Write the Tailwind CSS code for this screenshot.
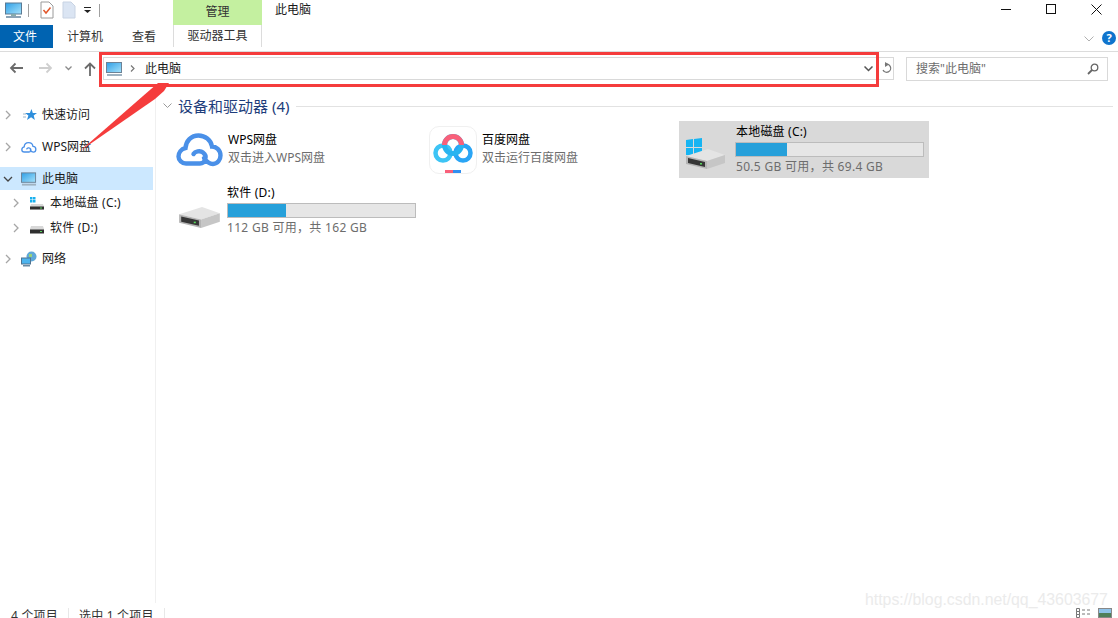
<!DOCTYPE html>
<html lang="zh-CN">
<head>
  <meta charset="UTF-8" />
  <title>此电脑</title>
  <script src="https://cdn.jsdelivr.net/npm/@tailwindcss/browser@4"></script>
</head>
<body class="bg-white text-[#1a1a1a] text-[12px] leading-[16px] font-['Noto_Sans','Noto_Sans_CJK_SC',sans-serif]">
  <div class="relative w-[1118px] h-[618px] overflow-hidden flex flex-col">

    <!-- title bar -->
    <div class="h-[25px] flex shrink-0">
      <div class="w-[173px] flex items-center pl-[5px] pb-[5px]">
        <svg width="17" height="17" viewBox="0 0 17 17"><defs><linearGradient id="screen" x1="0" y1="0" x2="1" y2="1"><stop offset="0" stop-color="#2f9fe6"/><stop offset="1" stop-color="#a5e2fb"/></linearGradient></defs><rect x="0.5" y="1" width="16" height="11" fill="url(#screen)" stroke="#5a7a94"/><rect x="6" y="12" width="5" height="2" fill="#8aa"/><rect x="1" y="14" width="15" height="2" fill="#8ba3b5"/></svg>
        <div class="w-px h-[13px] bg-[#a0a0a0] ml-[6px]"></div>
        <svg class="ml-[11px]" width="14" height="18" viewBox="0 0 14 18"><path d="M1 1h8l4 4v12H1z" fill="#fff" stroke="#9a9a9a"/><path d="M3.500 9l2.500 3 4.500-5.500" fill="none" stroke="#e2572b" stroke-width="1.500"/></svg>
        <svg class="ml-[8px]" width="14" height="18" viewBox="0 0 14 18"><path d="M1 1h8l4 4v12H1z" fill="#dbe5f3" stroke="#c8d3e3"/></svg>
        <svg class="ml-[8px]" width="7" height="6" viewBox="0 0 7 6"><rect width="7" height="1" fill="#222"/><path d="M0 3h7L3.500 6z" fill="#222"/></svg>
        <div class="w-px h-[13px] bg-[#a0a0a0] ml-[8px]"></div>
      </div>
      <div class="w-[89px] bg-[#c4f0a0] flex justify-center items-center pb-[2px] text-[#333]">管理</div>
      <div class="pl-[13px] pt-[2px]">此电脑</div>
      <div class="ml-auto flex">
        <div class="w-[45px] flex justify-center pt-[9px]"><div class="w-[10px] h-px bg-[#111]"></div></div>
        <div class="w-[46px] flex justify-center pt-[4px]"><div class="w-[10px] h-[10px] border border-[#111]"></div></div>
        <div class="w-[44px] flex justify-center pt-[4px]"><svg width="11" height="11" viewBox="0 0 11 11"><path d="M.5.500l10 10M10.500.500l-10 10" stroke="#111"/></svg></div>
      </div>
    </div>

    <!-- ribbon tabs -->
    <div class="h-[27px] flex shrink-0 border-b border-[#dcdcdc]">
      <div class="w-[53px] h-[23px] bg-[#0063b1] text-white flex items-center justify-center pr-[3px]">文件</div>
      <div class="w-[64px] h-[23px] flex items-center justify-center text-[#333]">计算机</div>
      <div class="w-[56px] h-[23px] flex items-center justify-center text-[#333] pr-[2px]">查看</div>
      <div class="w-[89px] h-[22px] flex items-center justify-center border-x border-[#dcdcdc] text-[#333]">驱动器工具</div>
      <div class="ml-auto flex items-start pt-[11px] pr-[2px]">
        <svg width="10" height="6" viewBox="0 0 10 6"><path d="M.5.500L5 5l4.500-4.500" fill="none" stroke="#b0b0b0"/></svg>
        <div class="ml-[8px] -mt-[5px] w-[14px] h-[14px] rounded-full bg-[#0f74cd] text-white text-[11px] leading-[14px] font-bold text-center">?</div>
      </div>
    </div>

    <!-- address row -->
    <div class="h-[38px] shrink-0 flex items-start pt-[5px] pl-[9px]">
      <svg class="mt-[5px]" width="14" height="12" viewBox="0 0 14 12"><path d="M14 6H2M6.500 1.500L2 6l4.500 4.500" fill="none" stroke="#6b6b6b" stroke-width="1.800"/></svg>
      <svg class="mt-[5px] ml-[16px]" width="14" height="12" viewBox="0 0 14 12"><path d="M0 6h12M7.500 1.500L12 6l-4.500 4.500" fill="none" stroke="#cfcfcf" stroke-width="1.800"/></svg>
      <svg class="mt-[9px] ml-[12px]" width="7" height="5" viewBox="0 0 7 5"><path d="M.5.500l3 3 3-3" fill="none" stroke="#8a8a8a" stroke-width="1.300"/></svg>
      <svg class="mt-[5px] ml-[12px]" width="12" height="14" viewBox="0 0 12 14"><path d="M6 14V2M1 6.500L6 1.500l5 5" fill="none" stroke="#6b6b6b" stroke-width="1.800"/></svg>
      <div class="ml-[7px] w-[775px] h-[23px] border border-[#d9d9d9] flex items-center pl-[2px]">
        <svg width="17" height="16" viewBox="0 0 17 16"><rect x="0.500" y="1.500" width="15" height="10" fill="url(#screen)" stroke="#6c8296"/><rect x="1" y="13" width="15" height="2" fill="#9fb2c0"/></svg>
        <svg class="ml-[7px]" width="5" height="7" viewBox="0 0 5 7"><path d="M1 .500l3 3-3 3" fill="none" stroke="#777" stroke-width="1.200"/></svg>
        <span class="ml-[10px]">此电脑</span>
        <svg class="ml-auto mr-[4px]" width="9" height="6" viewBox="0 0 9 6"><path d="M.5.500l4 4 4-4" fill="none" stroke="#555" stroke-width="1.500"/></svg>
      </div>
      <div class="w-[16px] h-[23px] border border-l-0 border-[#d9d9d9] flex items-center justify-center">
        <svg width="12" height="13" viewBox="0 0 12 13"><path d="M6.500 2.500a4 4 0 1 1-4 4" fill="none" stroke="#777" stroke-width="1.300" transform="rotate(-25 6 6)"/><path d="M5 0l4 2.500L5 5z" fill="#777"/></svg>
      </div>
      <div class="ml-[12px] w-[202px] h-[24px] border border-[#d9d9d9] flex items-center pl-[9px] pr-[8px] text-[#6d6d6d]">
        <span>搜索"此电脑"</span>
        <svg class="ml-auto" width="12" height="12" viewBox="0 0 12 12"><circle cx="7.500" cy="4.500" r="3.300" fill="none" stroke="#666" stroke-width="1.300"/><path d="M5 7L1 11" stroke="#666" stroke-width="1.800"/></svg>
      </div>
    </div>

    <!-- body -->
    <div class="flex flex-1 min-h-0">
      <!-- nav pane -->
      <div class="w-[156px] shrink-0 border-r border-[#f0f0f0] pt-[13px] pr-[2px]">
        <div class="h-[24px] flex items-center pl-[5px]">
          <svg width="6" height="10" viewBox="0 0 6 10"><path d="M1 1l4 4-4 4" fill="none" stroke="#a6a6a6" stroke-width="1.300"/></svg>
          <svg class="ml-[12px]" width="14" height="14" viewBox="0 0 14 14"><path d="M8.500 1l1.300 4H14l-3.300 2.600 1.200 4.400-3.800-2.700L4 12l1.400-4.400L2 5h4.800z" fill="#2f8fdc"/><path d="M0 6h3M0 9h3" stroke="#9fb4c5"/></svg>
          <span class="ml-[5px]">快速访问</span>
        </div>
        <div class="h-[24px] mt-[8px] flex items-center pl-[5px]">
          <svg width="6" height="10" viewBox="0 0 6 10"><path d="M1 1l4 4-4 4" fill="none" stroke="#a6a6a6" stroke-width="1.300"/></svg>
          <svg class="ml-[10px]" width="16" height="13" viewBox="0 0 48 36"><path d="M37 32C42 32 44.500 27 44.500 23.500C44.500 18 40 14.500 36 14.500C35 8 29 3.500 22.500 3.500C15 3.500 10 9 9.500 16C5 17 2.500 21 2.500 24.500C2.500 28 6 31.500 10 31.500L24 31.500C29 31.500 32 24 27 20.500C24 18 19 19.500 17.500 22M37 32C33 32 30 29 28 26" fill="none" stroke="#4a90e8" stroke-width="4" stroke-linecap="round"/></svg>
          <span class="ml-[5px]">WPS网盘</span>
        </div>
        <div class="h-[23px] mt-[8px] bg-[#cce8ff] flex items-center pl-[3px]">
          <svg width="10" height="6" viewBox="0 0 10 6"><path d="M1 1l4 4 4-4" fill="none" stroke="#444" stroke-width="1.300"/></svg>
          <svg class="ml-[8px]" width="16" height="16" viewBox="0 0 17 16"><rect x="0.500" y="1.500" width="15" height="10" fill="url(#screen)" stroke="#6c8296"/><rect x="1" y="13" width="15" height="2" fill="#9fb2c0"/></svg>
          <span class="ml-[5px]">此电脑</span>
        </div>
        <div class="h-[24px] mt-px flex items-center pl-[13px]">
          <svg width="6" height="10" viewBox="0 0 6 10"><path d="M1 1l4 4-4 4" fill="none" stroke="#a6a6a6" stroke-width="1.300"/></svg>
          <svg class="ml-[10px]" width="16" height="14" viewBox="0 0 16 14"><path d="M1 1h2.500v2.500H1zM4 1h2.500v2.500H4zM1 4h2.500v2.500H1zM4 4h2.500v2.500H4z" fill="#19b0ee"/><path d="M2 8h12l1 2.500v3H1v-3z" fill="#d8d8d8"/><rect x="1" y="10.500" width="14" height="3" fill="#2f2f2f"/><rect x="11" y="11.500" width="2" height="1" fill="#57d65b"/></svg>
          <span class="ml-[5px] tracking-[0.2px]">本地磁盘 (C:)</span>
        </div>
        <div class="h-[24px] mt-px flex items-center pl-[13px]">
          <svg width="6" height="10" viewBox="0 0 6 10"><path d="M1 1l4 4-4 4" fill="none" stroke="#a6a6a6" stroke-width="1.300"/></svg>
          <svg class="ml-[10px]" width="16" height="14" viewBox="0 0 16 14"><path d="M2 5h12l1 3v3H1V8z" fill="#d8d8d8"/><rect x="1" y="8.500" width="14" height="4" fill="#2f2f2f"/><rect x="11" y="10" width="2" height="1" fill="#57d65b"/></svg>
          <span class="ml-[5px] tracking-[0.2px]">软件 (D:)</span>
        </div>
        <div class="h-[24px] mt-[7px] flex items-center pl-[5px]">
          <svg width="6" height="10" viewBox="0 0 6 10"><path d="M1 1l4 4-4 4" fill="none" stroke="#a6a6a6" stroke-width="1.300"/></svg>
          <svg class="ml-[10px]" width="16" height="16" viewBox="0 0 16 16"><circle cx="10.500" cy="5.500" r="5" fill="#5fa8d8"/><path d="M8 3h3v3H8z" fill="#9ad27a"/><rect x="0.500" y="7" width="9" height="6" fill="#4cb4ee" stroke="#4f7390"/><rect x="2" y="14" width="7" height="1.500" fill="#6a8aa2"/></svg>
          <span class="ml-[5px]">网络</span>
        </div>
      </div>

      <!-- content pane -->
      <div class="flex-1 min-w-0 pl-[7px] pr-[5px]">
        <div class="h-[18px] mt-[7px] flex items-center">
          <svg width="9" height="6" viewBox="0 0 9 6"><path d="M.5.500l4 4 4-4" fill="none" stroke="#9a9a9a"/></svg>
          <span class="ml-[6px] text-[15px] text-[#1e3d7b]">设备和驱动器 (4)</span>
          <div class="ml-[7px] flex-1 h-px bg-[#e2e2e2]"></div>
        </div>
        <div class="ml-[8px] mt-[6px] grid grid-cols-[253px_255px_250px] auto-rows-[61px]">

          <div class="h-[57px] flex items-center pl-[5px]">
            <svg width="48" height="36" viewBox="0 0 48 36"><path d="M37 32C42 32 44.500 27 44.500 23.500C44.500 18 40 14.500 36 14.500C35 8 29 3.500 22.500 3.500C15 3.500 10 9 9.500 16C5 17 2.500 21 2.500 24.500C2.500 28 6 31.500 10 31.500L24 31.500C29 31.500 32 24 27 20.500C24 18 19 19.500 17.500 22M37 32C33 32 30 29 28 26" fill="none" stroke="#4a90e8" stroke-width="4.400" stroke-linecap="round"/></svg>
            <div class="ml-[4px] pb-[2px]"><div class="text-black">WPS网盘</div><div class="mt-[2px] text-[#6d6d6d]">双击进入WPS网盘</div></div>
          </div>

          <div class="h-[57px] flex items-center pl-[5px]">
            <div class="relative w-[48px] h-[48px] rounded-[10px] border border-[#f0f0f0]">
              <svg width="46" height="46" viewBox="0 0 46 46"><circle cx="13" cy="26" r="7.500" fill="none" stroke="#3dc4f5" stroke-width="4.500"/><circle cx="33" cy="26" r="7.500" fill="none" stroke="#2aa5f5" stroke-width="4.500"/><circle cx="23" cy="18" r="8.500" fill="none" stroke="#29b4f0" stroke-width="5"/><path d="M14.500 18a8.500 8.500 0 0 1 17 0" fill="none" stroke="#f9607a" stroke-width="5"/></svg>
              <div class="absolute left-[15px] bottom-0 w-[16px] h-[3px] flex"><div class="flex-1 bg-[#f9607a]"></div><div class="flex-1 bg-[#2f8ff0]"></div></div>
            </div>
            <div class="ml-[5px] pb-[2px]"><div class="text-black">百度网盘</div><div class="mt-[2px] text-[#6d6d6d]">双击运行百度网盘</div></div>
          </div>

          <div class="h-[57px] bg-[#d9d9d9] flex items-center pl-[6px]">
            <svg width="46" height="38" viewBox="0 0 46 38"><path d="M1 9l7-1v8H1zM9 8l8-1v9H9zM1 17h7v8l-7-1zM9 17h8v9l-8-1z" fill="#16b4f2"/><path d="M1 25L23 18L40 24L22 30Z" fill="#e4e4e4"/><path d="M22 30L40 24V32L22 38Z" fill="#c6c6c6"/><path d="M1 25L22 30V38L1 33Z" fill="#b4b4b4"/><path d="M3 27L20 31V36L3 32Z" fill="#363636"/><rect x="15" y="32" width="2" height="1.500" fill="#57d65b"/></svg>
            <div class="ml-[4px] w-[189px]">
              <div class="text-black tracking-[0.2px] pl-px">本地磁盘 (C:)</div>
              <div class="h-[15px] mt-[2px] border border-[#bcbcbc] bg-[#e6e6e6]"><div class="h-full bg-[#26a0da]" style="width:27.500%"></div></div>
              <div class="mt-[2px] text-[#6d6d6d] tracking-[0.3px] pl-px">50.5 GB 可用，共 69.4 GB</div>
            </div>
          </div>

          <div class="h-[57px] flex items-center pl-[7px]">
            <svg class="mt-[14px]" width="44" height="24" viewBox="0 17 42 23"><path d="M1 25L23 18L40 24L22 30Z" fill="#e4e4e4"/><path d="M22 30L40 24V32L22 38Z" fill="#c6c6c6"/><path d="M1 25L22 30V38L1 33Z" fill="#b4b4b4"/><path d="M3 27L20 31V36L3 32Z" fill="#363636"/><rect x="15" y="32" width="2" height="1.500" fill="#57d65b"/></svg>
            <div class="ml-[5px] w-[189px]">
              <div class="text-black tracking-[0.2px]">软件 (D:)</div>
              <div class="h-[15px] mt-[2px] border border-[#bcbcbc] bg-[#e6e6e6]"><div class="h-full bg-[#26a0da]" style="width:31%"></div></div>
              <div class="mt-[2px] text-[#6d6d6d] tracking-[0.3px]">112 GB 可用，共 162 GB</div>
            </div>
          </div>

        </div>
      </div>
    </div>

    <!-- status bar, cut off by the bottom of the picture as in the shot -->
    <div class="h-[15px] shrink-0 flex items-start pl-[11px] pt-[5px] text-[#333]">
      <span class="tracking-[0.2px]">4 个项目</span>
      <div class="w-px h-[10px] bg-[#e8e8e8] ml-[10px]"></div>
      <span class="ml-[10px] tracking-[0.2px]">选中 1 个项目</span>
      <div class="w-px h-[10px] bg-[#e8e8e8] ml-[10px]"></div>
      <div class="ml-auto flex items-start mr-[6px]">
        <svg width="15" height="10" viewBox="0 0 15 10"><path d="M.5.500h3v3h-3zM.5 3.500h3v3h-3zM.5 6.500h3v3h-3z" fill="none" stroke="#777"/><path d="M6 2h3M11 2h3M6 6h3M11 6h3" stroke="#777"/></svg>
        <div class="ml-[7px] w-[14px] h-[10px] border border-[#888] bg-[linear-gradient(#8ec3ea_50%,#4f7f5a_50%)]"></div>
      </div>
    </div>

    <!-- screenshot annotations -->
    <div class="absolute left-[99px] top-[52px] w-[780px] h-[35px] border-[3px] border-[#f53c3c]"></div>
    <svg class="absolute left-[75px] top-[80px]" width="105" height="75" viewBox="0 0 105 75"><path d="M5 71L68 16L83 3L94 3L89 11L80 19Z" fill="#f53c3c"/></svg>
    <div class="absolute left-[865px] top-[590px] text-[15.840px] leading-[20px] text-[#ebebeb] font-['Liberation_Sans',sans-serif]">https://blog.csdn.net/qq_43603677</div>
  </div>
</body>
</html>
